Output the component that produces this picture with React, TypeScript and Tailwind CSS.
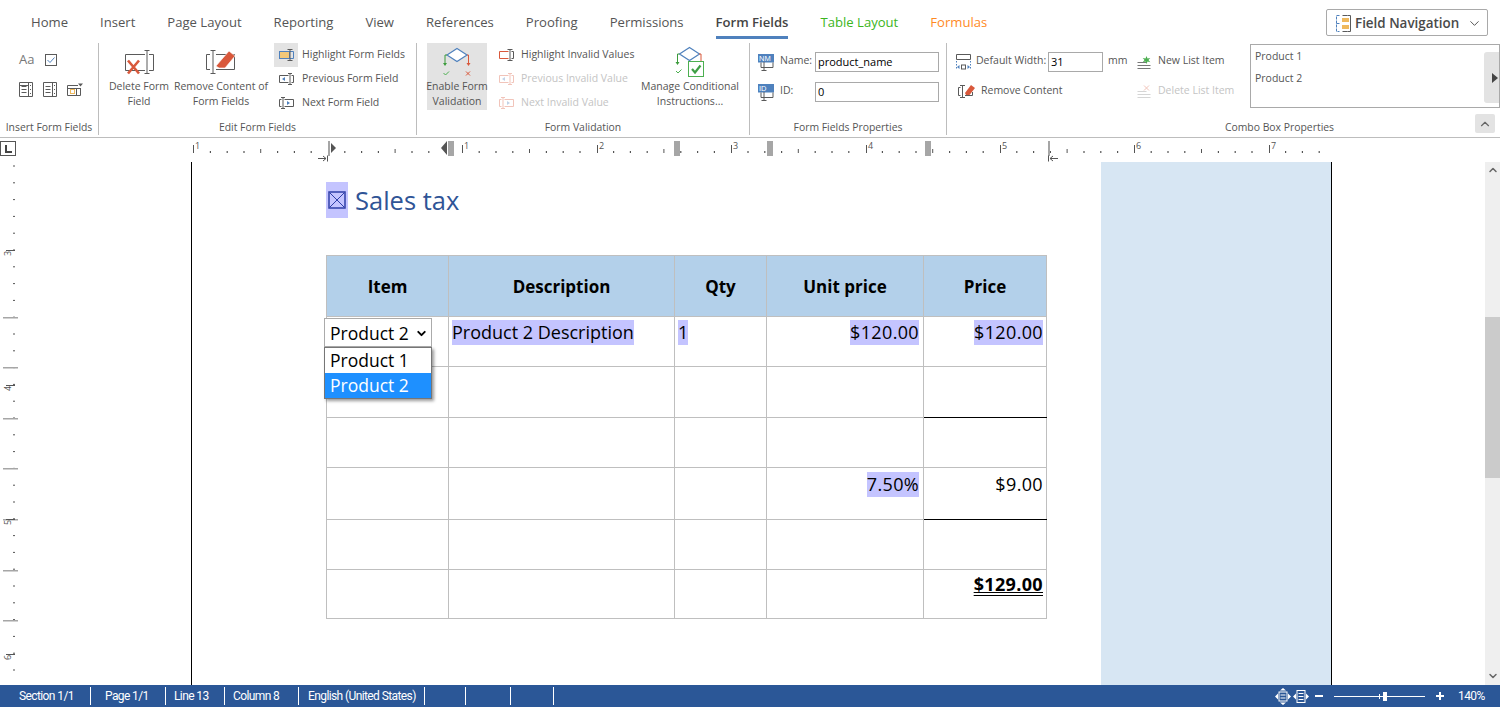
import type { ReactNode } from "react";
import { ChevronDown, ChevronUp } from "lucide-react";

const GRAY = "#5a5a5a";
const RED = "#d9583b";
const BLUE = "#4f81bd";
const GREEN = "#4caf50";

const tabs = ["Home", "Insert", "Page Layout", "Reporting", "View", "References", "Proofing", "Permissions"];

function Beam({ x, top, bottom }: { x: number; top: number; bottom: number }) {
  return <path d={`M${x - 2.5} ${top}h5M${x} ${top}V${bottom}M${x - 2.5} ${bottom}h5`} stroke={GRAY} fill="none" />;
}

const DeleteIcon = (
  <svg width="30" height="25" viewBox="0 0 30 25">
    <path d="M21 4.500H1.500v16H21M25 4.500h4.500v16H25" stroke={GRAY} fill="none" />
    <Beam x={23} top={0.5} bottom={23.5} />
    <path d="M4 10.500l11 13M15 10.500l-11 13" stroke={RED} strokeWidth="2.600" />
  </svg>
);

const RemoveIcon = (
  <svg width="30" height="26" viewBox="0 0 30 26">
    <path d="M4 5.500H.5v15H4M10 5.500h18.500v15H10" stroke={GRAY} fill="none" />
    <Beam x={7} top={1.5} bottom={24.500} />
    <path d="M10 17l13-15 6 5-10 12h-6z" fill={RED} stroke="#fff" strokeWidth=".6" />
  </svg>
);

const HighlightIcon = (
  <svg width="15" height="12" viewBox="0 0 15 12">
    <rect x=".5" y="2.500" width="10" height="7" fill="#f2c879" stroke={BLUE} />
    <path d="M11 2.500h3.500v7H11" stroke={BLUE} fill="none" />
    <Beam x={11} top={.5} bottom={11.5} />
  </svg>
);

function PrevIcon({ color = GRAY }: { color?: string }) {
  return (
    <svg width="15" height="12" viewBox="0 0 15 12">
      <path d="M9.500 2.500h-9v7h9M12.500 2.500h2v7h-2" stroke={color} fill="none" />
      <path d="M11 .5v11M9 .5h4M9 11.500h4" stroke={color} fill="none" />
      <path d="M3 6l3-2v4z" fill={BLUE} />
    </svg>
  );
}

function NextIcon({ color = GRAY }: { color?: string }) {
  return (
    <svg width="15" height="12" viewBox="0 0 15 12">
      <path d="M2.500 2.500h-2v7h2M5.500 2.500h9v7h-9" stroke={color} fill="none" />
      <path d="M4 .5v11M2 .5h4M2 11.500h4" stroke={color} fill="none" />
      <path d="M8 4l3 2-3 2z" fill={BLUE} />
    </svg>
  );
}

const InvalidIcon = (
  <svg width="15" height="12" viewBox="0 0 15 12">
    <path d="M9.500 2.500h-9v7h9" stroke={RED} fill="none" />
    <path d="M12.500 2.500h2v7h-2" stroke={GRAY} fill="none" />
    <Beam x={11} top={.5} bottom={11.5} />
  </svg>
);

function FlowLines() {
  return (
    <>
      <path d="M12.500 1.500l10 6.500-10 6.500-10-6.500z" fill="#fff" stroke={BLUE} strokeWidth="1.200" />
    </>
  );
}

const ValidationIcon = (
  <svg width="28" height="31" viewBox="0 0 28 31">
    <g transform="translate(1.500 0)">
      <FlowLines />
      <path d="M2.500 8H.5v9" stroke="#3b9b3b" fill="none" />
      <path d="M-1.500 16h4l-2 3z" fill="#3b9b3b" />
      <path d="M22.500 8h1.500v9" stroke={RED} fill="none" />
      <path d="M22 16h4l-2 3z" fill={RED} />
      <path d="M-1 26l2 2 3.500-3.500" stroke={GREEN} fill="none" />
      <path d="M21.500 24.500l4 4M25.500 24.500l-4 4" stroke={RED} fill="none" />
    </g>
  </svg>
);

const ManageIcon = (
  <svg width="30" height="32" viewBox="0 0 30 32">
    <g transform="translate(2 0)">
      <FlowLines />
      <path d="M2.500 8H.5v9" stroke="#3b9b3b" fill="none" />
      <path d="M-1.500 16h4l-2 3z" fill="#3b9b3b" />
      <path d="M-1 25l2 2 3.500-3.500" stroke={GREEN} fill="none" />
    </g>
    <path d="M24 8h2v7" stroke={RED} fill="none" />
    <rect x="13.500" y="15.500" width="15" height="15" fill="#fff" stroke={GREEN} />
    <path d="M17 23l3 3.500 5.500-7" stroke="#3f9f45" strokeWidth="2.200" fill="none" />
  </svg>
);

function TagIcon({ tag }: { tag: string }) {
  return (
    <svg width="17" height="17" viewBox="0 0 17 17">
      <rect width="16" height="8.500" fill={BLUE} />
      <text x="1" y="7.200" fontSize="7.500" fill="#fff" fontFamily="Liberation Sans">{tag}</text>
      <path d="M3 8.500v5h12v-5M6 8v8M3.500 16.500h5" stroke={GRAY} fill="none" />
    </svg>
  );
}

const WidthIcon = (
  <svg width="15" height="17" viewBox="0 0 15 17">
    <path d="M.5 .5h14v5H.5z" stroke={GRAY} fill="none" />
    <path d="M.5 7v9M14.500 7v9" stroke={BLUE} strokeDasharray="1.500 1.500" />
    <path d="M1 13l2.500-2v4zM14 13l-2.500-2v4z" fill={BLUE} />
    <rect x="5.500" y="11" width="4" height="4" fill="none" stroke={GRAY} />
  </svg>
);

const RemoveSmallIcon = (
  <svg width="17" height="15" viewBox="0 0 17 15">
    <path d="M2.500 3.500H.5v8h2M7 3.500v0M14.500 8v3.500H7" stroke={GRAY} fill="none" />
    <Beam x={4.500} top={1.5} bottom={13.5} />
    <path d="M7 9l6-8 4 3-5.500 7H8z" fill={RED} />
  </svg>
);

function ListLines({ color }: { color: string }) {
  return <path d="M.5 6.500h9M.5 9.500h13M.5 12.500h13" stroke={color} fill="none" />;
}

const NewItemIcon = (
  <svg width="14" height="13" viewBox="0 0 14 13">
    <ListLines color="#777" />
    <path d="M9.500 0l1 2.500 2.800-.5-1.800 2 1.800 2.200-2.800-.7-1 2.500-1-2.500-2.800.7 1.800-2.200-1.800-2 2.800.5z" fill={GREEN} />
  </svg>
);

const DeleteItemIcon = (
  <svg width="14" height="13" viewBox="0 0 14 13" opacity=".35">
    <ListLines color="#888" />
    <path d="M7 .5l5 5M12 .5l-5 5" stroke={RED} fill="none" />
  </svg>
);

const FieldNavIcon = (
  <svg width="15" height="17" viewBox="0 0 15 17">
    <path d="M3.500 .5h-3v16h3M.5 8.500h3" stroke={BLUE} strokeDasharray="3 1" fill="none" />
    <path d="M11.500 .5h3v16h-3" stroke={GRAY} fill="none" />
    <path d="M6.500 .5h5M6.500 16.500h5" stroke={GRAY} />
    <rect x="6" y="3" width="7" height="4" fill="#efb95d" />
    <rect x="6" y="10" width="7" height="4" fill="#efb95d" />
  </svg>
);

const CheckIcon = (
  <svg width="12" height="12" viewBox="0 0 12 12">
    <rect x=".5" y=".5" width="11" height="11" fill="#fff" stroke={GRAY} />
    <path d="M2.500 6l2.500 2.500 4.500-5" stroke={BLUE} fill="none" />
  </svg>
);

function GridIcon({ variant }: { variant: 0 | 1 | 2 }) {
  if (variant === 2) {
    return (
      <svg width="16" height="13" viewBox="0 0 16 13">
        <path d="M11 2.500H.5v10h13V5M.5 5.500h13M9.500 5.500v7" stroke={GRAY} fill="none" />
        <rect x="3.500" y="6.500" width="4" height="4" fill="none" stroke="#efb95d" />
        <path d="M11 .5h5l-2.500 3z" fill={GRAY} />
      </svg>
    );
  }
  return (
    <svg width="14" height="15" viewBox="0 0 14 15">
      <path d="M.5 .5h13v14H.5zM9.500 .5v14M2.500 4.500h5M2.500 7.500h5M2.500 10.500h5" stroke={GRAY} fill="none" />
      {variant === 0 && <path d="M.5 3.500h9" stroke={GRAY} />}
      <path d="M11.500 3v1M11.500 7v1M11.500 11v1" stroke={GRAY} />
    </svg>
  );
}

function BigButton({ icon, lines, width, active }: { icon: ReactNode; lines: string[]; width: string; active?: boolean }) {
  return (
    <div className={`flex h-[67px] shrink-0 flex-col items-center ${width} ${active ? "bg-[#e3e3e3]" : ""}`}>
      <div className="flex h-[36px] items-center justify-center pt-[2px]">{icon}</div>
      {lines.map((line) => (
        <span key={line} className="whitespace-nowrap text-[10.5px] leading-[15px]">{line}</span>
      ))}
    </div>
  );
}

function SmallButton({ icon, label, gap, active, disabled }: { icon: ReactNode; label: string; gap: string; active?: boolean; disabled?: boolean }) {
  return (
    <div className={`flex h-[24px] items-center ${gap} ${disabled ? "text-[#c4c4c4]" : ""}`}>
      <span className={`flex h-[24px] w-[24px] items-center justify-center ${active ? "bg-[#e3e3e3]" : ""} ${disabled ? "opacity-35" : ""}`}>{icon}</span>
      <span className="whitespace-nowrap text-[10.5px]">{label}</span>
    </div>
  );
}

function Group({ label, width, labelClass, children }: { label: string; width: string; labelClass?: string; children: ReactNode }) {
  return (
    <div className={`flex h-[92px] shrink-0 flex-col ${width}`}>
      <div className="h-[75px]">{children}</div>
      <div className={`flex-1 pt-[2px] text-center text-[10.4px] leading-[16px] ${labelClass ?? ""}`}>{label}</div>
    </div>
  );
}

function Ribbon() {
  return (
    <div className="h-[138px] shrink-0 border-b border-[#bdbdbd] text-[#555]">
      <div className="flex h-[43px] items-start">
        <div className="mt-[13px] flex gap-8 pl-[31px] text-[13.1px] leading-[18px]">
          {tabs.map((tab) => (
            <span key={tab} className="whitespace-nowrap">{tab}</span>
          ))}
          <span className="whitespace-nowrap border-b-[3px] border-[#4f81bd] pb-[5px] font-semibold text-[#444]">Form Fields</span>
          <span className="whitespace-nowrap text-[#3cb521]">Table Layout</span>
          <span className="whitespace-nowrap text-[#ff8a1f]">Formulas</span>
        </div>
        <div className="ml-auto mr-[12px] mt-[9px] flex h-[27px] w-[162px] items-center rounded-[2px] border border-[#a9a9a9] pl-[9px] pt-[1px] text-[13.4px] font-semibold text-[#4a4a4a]">
          {FieldNavIcon}
          <span className="ml-[4px] whitespace-nowrap">Field Navigation</span>
          <ChevronDown size={15} strokeWidth={1.5} className="ml-[8px]" />
        </div>
      </div>
      <div className="relative flex h-[94px] items-start">
        <Group label="Insert Form Fields" width="w-[99px] border-r border-[#bdbdbd]">
          <div className="mt-[9px] flex h-[16px] items-center gap-[11px] pl-[19px]">
            <span className="text-[13px] text-[#777]">Aa</span>
            {CheckIcon}
          </div>
          <div className="mt-[14px] flex items-center gap-[10px] pl-[19px]">
            <GridIcon variant={0} />
            <GridIcon variant={1} />
            <GridIcon variant={2} />
          </div>
        </Group>
        <Group label="Edit Form Fields" width="w-[318px] border-r border-[#bdbdbd]">
          <div className="flex pl-[10px]">
            <BigButton icon={DeleteIcon} lines={["Delete Form", "Field"]} width="w-[60px]" />
            <BigButton icon={RemoveIcon} lines={["Remove Content of", "Form Fields"]} width="ml-[5px] w-[94px]" />
            <div className="ml-[6px] flex flex-col">
              <SmallButton icon={HighlightIcon} label="Highlight Form Fields" gap="gap-[4px]" active />
              <SmallButton icon={<PrevIcon />} label="Previous Form Field" gap="gap-[4px]" />
              <SmallButton icon={<NextIcon />} label="Next Form Field" gap="gap-[4px]" />
            </div>
          </div>
        </Group>
        <Group label="Form Validation" width="w-[333px] border-r border-[#bdbdbd]">
          <div className="flex pl-[10px]">
            <BigButton icon={ValidationIcon} lines={["Enable Form", "Validation"]} width="w-[60px]" active />
            <div className="ml-[7px] flex w-[146px] flex-col">
              <SmallButton icon={InvalidIcon} label="Highlight Invalid Values" gap="gap-[3px]" />
              <SmallButton icon={<PrevIcon color={RED} />} label="Previous Invalid Value" gap="gap-[3px]" disabled />
              <SmallButton icon={<NextIcon color={RED} />} label="Next Invalid Value" gap="gap-[3px]" disabled />
            </div>
            <BigButton icon={ManageIcon} lines={["Manage Conditional", "Instructions..."]} width="w-[100px]" />
          </div>
        </Group>
        <Group label="Form Fields Properties" width="w-[197px] border-r border-[#bdbdbd]">
          <div className="flex flex-col gap-[10px] pl-[8px] pt-[9px]">
            <div className="flex h-[20px] items-center">
              <TagIcon tag="NM" />
              <span className="ml-[5px] w-[35px] pb-[2px] text-[10.5px]">Name:</span>
              <div className="flex h-[20px] w-[124px] items-center border border-[#a9a9a9] pl-[2px] text-[11px] text-black">product_name</div>
            </div>
            <div className="flex h-[20px] items-center">
              <TagIcon tag="ID" />
              <span className="ml-[5px] w-[35px] pb-[2px] text-[10.5px]">ID:</span>
              <div className="flex h-[20px] w-[124px] items-center border border-[#a9a9a9] pl-[2px] text-[11px] text-black">0</div>
            </div>
          </div>
        </Group>
        <Group label="Combo Box Properties" width="w-[553px]" labelClass="pl-[112px]">
          <div className="flex">
            <div className="flex flex-col gap-[10px] pl-[9px] pt-[9px] text-[10.5px]">
              <div className="flex h-[20px] items-center">
                {WidthIcon}
                <span className="ml-[5px] w-[72px] whitespace-nowrap pb-[2px]">Default Width:</span>
                <div className="flex h-[20px] w-[55px] items-center border border-[#a9a9a9] pl-[2px] text-[11px] text-black">31</div>
                <span className="ml-[5px] w-[29px] pb-[2px]">mm</span>
                {NewItemIcon}
                <span className="ml-[7px] whitespace-nowrap pb-[2px]">New List Item</span>
              </div>
              <div className="flex h-[18px] items-center">
                <span className="ml-[2px] flex w-[17px]">{RemoveSmallIcon}</span>
                <span className="ml-[6px] w-[156px] whitespace-nowrap">Remove Content</span>
                {DeleteItemIcon}
                <span className="ml-[7px] whitespace-nowrap text-[#c4c4c4]">Delete List Item</span>
              </div>
            </div>
            <div className="absolute left-[1250px] top-[1px] h-[64px] w-[250px] border border-[#a9a9a9] pl-[4px] text-[10.5px] leading-[22px]">
              <div>Product 1</div>
              <div>Product 2</div>
              <div className="absolute right-0 top-[7px] flex h-[51px] w-[15px] items-center justify-end rounded-l-[3px] bg-[#e3e3e3] pr-[1px]">
                <svg width="6" height="10" viewBox="0 0 6 10"><path d="M0 0l6 5-6 5z" fill="#444" /></svg>
              </div>
            </div>
          </div>
        </Group>
        <div className="absolute right-[5px] top-[71px] flex h-[19px] w-[20px] items-center justify-center rounded-[2px] bg-[#e3e3e3]">
          <ChevronUp size={14} strokeWidth={2} className="text-[#666]" />
        </div>
      </div>
    </div>
  );
}

const rulerDigits = [
  { x: 193, n: 1 },
  { x: 462, n: 1 },
  { x: 597, n: 2 },
  { x: 731, n: 3 },
  { x: 866, n: 4 },
  { x: 1000, n: 5 },
  { x: 1134, n: 6 },
  { x: 1269, n: 7 },
];

const rulerBlocks = [448, 674, 767, 925];

function TopRuler() {
  const ticks = Array.from({ length: 68 }, (_, i) => i).filter((i) => i % 8 !== 0);
  return (
    <div className="flex h-[24px] shrink-0">
      <div className="mt-[3px] flex h-[15px] w-[16px] items-center justify-center border border-[#555]">
        <svg width="8" height="8" viewBox="0 0 8 8"><path d="M1 0h2v6h5v2H1z" fill="#444" /></svg>
      </div>
      <svg width="1300" height="24" viewBox="180 0 1300 24" className="ml-[164px]">
        {ticks.map((i) => {
          const x = 193 + i * 16.8;
          if (x > 1325) return null;
          return i % 4 === 0
            ? <rect key={i} x={x} y={11} width="1" height="4" fill="#555" />
            : <rect key={i} x={x} y={13} width="1.200" height="2" fill="#555" />;
        })}
        {rulerDigits.map((d) => (
          <g key={d.x}>
            <rect x={d.x} y={7} width="1" height="8" fill="#555" />
            <text x={d.x + 2} y={11} fontSize="9" fill="#555" fontFamily="Open Sans">{d.n}</text>
          </g>
        ))}
        <rect x="328" y="3" width="2" height="15" fill="#a6a6a6" />
        <path d="M331 5l5 5-5 5z" fill="#555" />
        <path d="M447 3l-6 7 6 7z" fill="#555" />
        {rulerBlocks.map((x) => <rect key={x} x={x} y="3" width="6" height="15" fill="#a6a6a6" />)}
        <rect x="1048" y="3" width="2" height="15" fill="#a6a6a6" />
        <path d="M318 20.500h8M323 18l3 2.500-3 2.500M327.500 17.500v6" stroke="#555" fill="none" />
        <path d="M1058 20.500h-8M1053 18l-3 2.500 3 2.500M1048.500 17.500v6" stroke="#555" fill="none" />
      </svg>
    </div>
  );
}

const sideDigits = [
  { y: 88, n: 3 },
  { y: 223, n: 4 },
  { y: 357, n: 5 },
  { y: 492, n: 6 },
];

const sideBars = [155, 205, 256, 306, 357, 408, 458];

function SideRuler() {
  const ticks = Array.from({ length: 32 }, (_, i) => 3.5 + i * 16.8);
  return (
    <svg width="20" height="523" viewBox="0 0 20 523" className="shrink-0">
      {ticks.map((y) => <rect key={y} x="13" y={y} width="2" height="1" fill="#555" />)}
      {sideBars.map((y) => <rect key={y} x="3" y={y} width="15" height="1.500" fill="#a6a6a6" />)}
      {sideDigits.map((d) => (
        <g key={d.y}>
          <rect x="6" y={d.y} width="9" height="1" fill="#555" />
          <text transform={`translate(11 ${d.y + 6}) rotate(-90)`} fontSize="9" fill="#555" fontFamily="Open Sans">{d.n}</text>
        </g>
      ))}
    </svg>
  );
}

function Mark({ children }: { children: ReactNode }) {
  return <span className="inline-block bg-[#c4c4ff] leading-[25px]">{children}</span>;
}

const cellBase = "border border-[#bfbfbf] align-top text-[18px] leading-[25px]";
const rowHeights = ["h-[50px]", "h-[51px]", "h-[50px]", "h-[52px]", "h-[50px]", "h-[49px]"];

function rowCells(row: number) {
  const unit = row === 3 ? <Mark>7.50%</Mark> : row === 0 ? <Mark>$120.00</Mark> : null;
  const price =
    row === 0 ? <Mark>$120.00</Mark>
    : row === 3 ? "$9.00"
    : row === 5 ? <span className="font-bold underline decoration-double">$129.00</span>
    : null;
  return { unit, price };
}

function Combo() {
  return (
    <div className="absolute left-[-3px] top-[1px] z-10 w-[108px] text-[17.5px] leading-[25px] text-black">
      <div className="flex h-[29px] items-center border border-[#ababab] bg-white pl-[5px] pt-[1px]">
        Product 2
        <ChevronDown size={13} strokeWidth={3.500} className="ml-auto mr-[3px]" />
      </div>
      <div className="border border-[#767676] bg-white shadow-[2px_2px_3px_rgba(0,0,0,0.4)]">
        <div className="h-[25px] pl-[5px]">Product 1</div>
        <div className="h-[25px] bg-[#1e90ff] pl-[5px] text-white">Product 2</div>
      </div>
    </div>
  );
}

function InvoiceTable() {
  return (
    <table className="mt-[37px] w-[721px] table-fixed border-collapse text-black">
      <colgroup>
        <col className="w-[122px]" />
        <col className="w-[226px]" />
        <col className="w-[92px]" />
        <col className="w-[157px]" />
        <col className="w-[123px]" />
      </colgroup>
      <thead>
        <tr className="h-[61px] bg-[#b3d0ea] text-[17px] font-bold">
          {["Item", "Description", "Qty", "Unit price", "Price"].map((h) => (
            <th key={h} className="border border-[#bfbfbf] pt-[1px] text-center align-middle font-bold">{h}</th>
          ))}
        </tr>
      </thead>
      <tbody>
        {rowHeights.map((height, row) => {
          const { unit, price } = rowCells(row);
          const rule = row === 1 || row === 3 ? "border-b-black" : "";
          const pad = row === 3 ? "pt-[4px]" : row === 5 ? "pt-[2px]" : "pt-[3px]";
          return (
            <tr key={row} className={height}>
              <td className={`${cellBase} relative`}>{row === 0 && <Combo />}</td>
              <td className={`${cellBase} ${pad} pl-[3px]`}>{row === 0 && <Mark>Product 2 Description</Mark>}</td>
              <td className={`${cellBase} ${pad} pl-[3px]`}>{row === 0 && <Mark>1</Mark>}</td>
              <td className={`${cellBase} ${pad} pr-[4px] text-right tracking-[0.35px]`}>{unit}</td>
              <td className={`${cellBase} ${pad} ${rule} pr-[3px] text-right tracking-[0.35px]`}>{price}</td>
            </tr>
          );
        })}
      </tbody>
    </table>
  );
}

function Page() {
  return (
    <div className="ml-[171px] flex h-full w-[1141px] border-x border-black">
      <div className="flex-1 pl-[134px] pt-[20px]">
        <div className="flex h-[36px] items-center">
          <span className="flex h-[36px] w-[22px] items-center justify-center bg-[#c4c4ff]">
            <svg width="18" height="18" viewBox="0 0 18 18">
              <rect x="1" y="1" width="16" height="16" fill="none" stroke="#2f3fa8" strokeWidth="1.500" />
              <path d="M2 2l14 14M16 2L2 16" stroke="#2f3fa8" />
            </svg>
          </span>
          <span className="ml-[7px] pt-[1px] text-[25.5px] text-[#2f5496]">Sales tax</span>
        </div>
        <InvoiceTable />
      </div>
      <div className="w-[230px] bg-[#d7e6f3]" />
    </div>
  );
}

function Scrollbar() {
  return (
    <div className="flex w-[15px] shrink-0 flex-col bg-[#efefef]">
      <ChevronUp size={12} strokeWidth={3} className="ml-[1.500px] mt-[2px] text-[#666]" />
      <div className="mt-[141px] h-[161px] bg-[#cbcbcb]" />
      <ChevronDown size={12} strokeWidth={3} className="ml-[1.500px] mt-auto mb-[3px] text-[#666]" />
    </div>
  );
}

const statusCells = [
  { label: "Section 1/1", className: "w-[91px] pl-[19px]" },
  { label: "Page 1/1", className: "w-[75px] pl-[14px]" },
  { label: "Line 13", className: "w-[59px] pl-[8px]" },
  { label: "Column 8", className: "w-[74px] pl-[8px]" },
  { label: "English (United States)", className: "w-[126px] pl-[9px]" },
  { label: "", className: "w-[41px]" },
  { label: "", className: "w-[45px]" },
  { label: "", className: "w-[43px]" },
];

function StatusBar() {
  return (
    <div className="flex h-[22px] shrink-0 items-center bg-[#2b5797] font-['Roboto',sans-serif] text-[12px] tracking-[-0.6px] text-white">
      {statusCells.map((cell, i) => (
        <div key={i} className={`flex h-[18px] items-center whitespace-nowrap border-r border-white ${cell.className}`}>{cell.label}</div>
      ))}
      <div className="ml-auto flex items-center pr-[16px]">
        <svg width="34" height="17" viewBox="0 0 34 17" fill="#fff">
          <path d="M0 8.500l3-3v6zM16 8.500l-3-3v6zM8 0l3 2.500H5zM8 17l3-2.500H5z" />
          <rect x="4" y="4" width="8" height="9" fill="none" stroke="#fff" />
          <path d="M5.500 7h5M5.500 10h5" stroke="#fff" />
          <path d="M18 8.500l3-3v6zM34 8.500l-3-3v6z" />
          <rect x="22" y="2.500" width="8" height="12" fill="none" stroke="#fff" />
          <path d="M23.500 5.500h5M23.500 8.500h5M23.500 11.500h5" stroke="#fff" />
        </svg>
        <span className="ml-[6px] h-[2px] w-[8px] bg-white" />
        <div className="relative ml-[11px] h-[1px] w-[91px] bg-white">
          <span className="absolute left-[45px] top-[-2px] h-[5px] w-[1px] bg-white" />
          <span className="absolute left-[49px] top-[-4px] h-[9px] w-[4px] bg-white" />
        </div>
        <span className="relative ml-[11px] h-[2px] w-[8px] bg-white">
          <span className="absolute left-[3px] top-[-3px] h-[8px] w-[2px] bg-white" />
        </span>
        <span className="ml-[14px] w-[26px] text-[12px]">140%</span>
      </div>
    </div>
  );
}

export default function App() {
  return (
    <div className="flex h-[707px] w-[1500px] flex-col overflow-hidden bg-white font-['Open_Sans','Liberation_Sans',sans-serif]">
      <Ribbon />
      <TopRuler />
      <div className="flex min-h-0 flex-1">
        <SideRuler />
        <div className="min-w-0 flex-1"><Page /></div>
        <Scrollbar />
      </div>
      <StatusBar />
    </div>
  );
}
